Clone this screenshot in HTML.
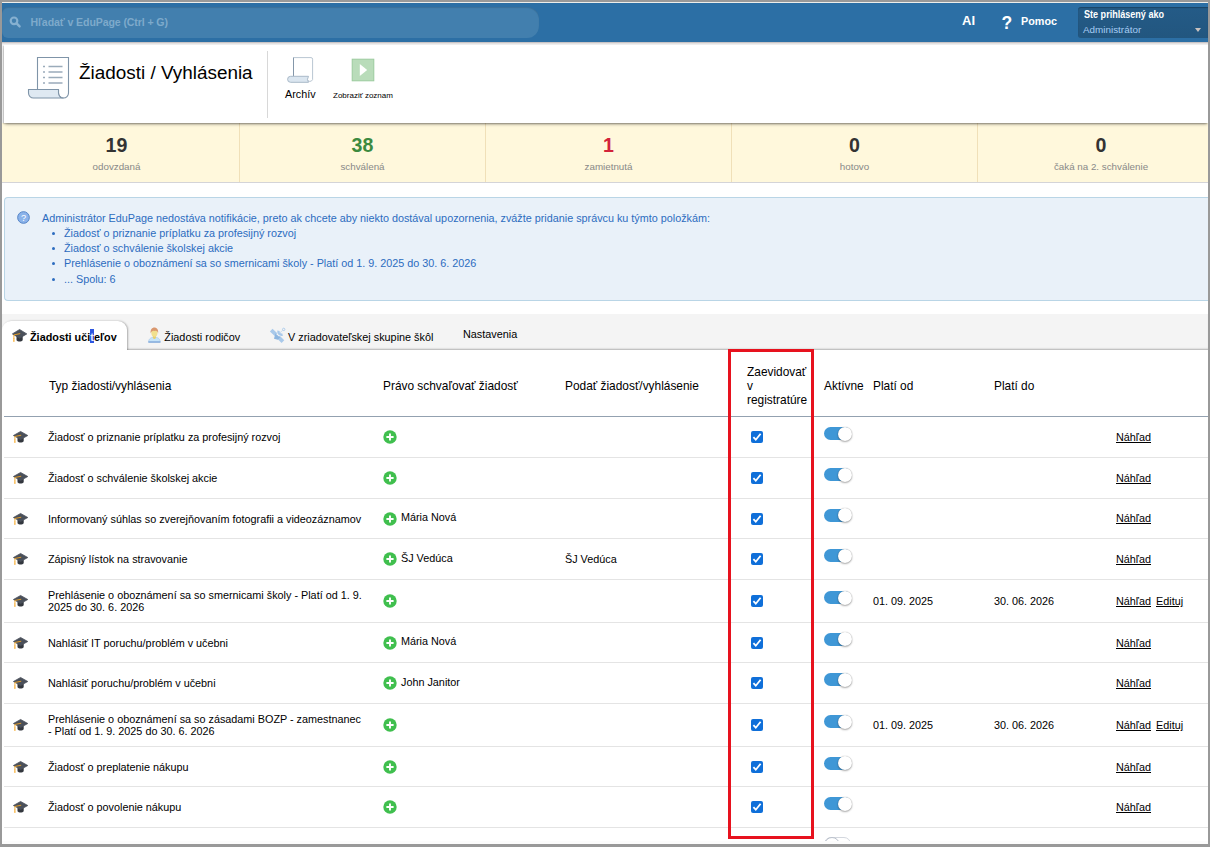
<!DOCTYPE html>
<html lang="sk">
<head>
<meta charset="utf-8">
<title>Žiadosti / Vyhlásenia</title>
<style>
*{box-sizing:border-box;margin:0;padding:0}
html,body{width:1210px;height:847px;overflow:hidden;background:#fff}
body{font-family:"Liberation Sans",sans-serif;font-size:10.82px;color:#000;position:relative}
.abs{position:absolute}
#frame{position:absolute;left:0;top:0;width:1210px;height:847px;border-style:solid;border-color:#999;border-width:2px 2px 3px 2px;z-index:50;pointer-events:none}
#topline{position:absolute;left:2px;top:2px;width:1206px;height:1px;background:#eeeeea}
#bar{position:absolute;left:2px;top:3px;width:1206px;height:39px;background:#2c6fa5}
#search{position:absolute;left:2px;top:7px;width:537px;height:31px;background:#427fae;border-radius:0 12px 12px 0;border-top-left-radius:6px;border-bottom-left-radius:6px;box-shadow:inset 0 1px 1px rgba(0,0,0,.12)}
#search span{position:absolute;left:28.4px;top:9px;font-size:10.55px;font-weight:bold;color:#7eaacb;white-space:nowrap;letter-spacing:-0.1px}
#ai{position:absolute;left:962px;top:13px;font-size:13px;font-weight:bold;color:#fff}
#q{position:absolute;left:1001.5px;top:13px;font-size:17.5px;font-weight:bold;color:#fff}
#pomoc{position:absolute;left:1021px;top:15px;font-size:10.8px;font-weight:bold;color:#fff}
#user{position:absolute;left:1078px;top:7px;width:130px;height:31px;background:linear-gradient(#245b87,#22567f);border-radius:3px 0 0 3px;box-shadow:inset 0 1px 1px rgba(0,0,0,.25)}
#user b{position:absolute;left:6px;top:2px;font-size:10px;color:#fff;white-space:nowrap;transform:scaleX(.905);transform-origin:0 0}
#user span{position:absolute;left:5px;top:17px;font-size:9.9px;color:#a6ccf3;white-space:nowrap}
#user i{position:absolute;left:117px;top:21px;width:0;height:0;border-left:3.5px solid transparent;border-right:3.5px solid transparent;border-top:4px solid #c9c2bf}
#shade{position:absolute;left:2px;top:42px;width:1206px;height:82px;background:linear-gradient(#c9c4c5 0,#c9c4c5 1px,#e3e1e1 1px,#e3e1e1 2px,#efefef 2px,#efefef 3px,#f3f3f3 3px)}
#head{position:absolute;left:4px;top:45px;width:1204px;height:78px;background:#fff;box-shadow:0 2px 3px -1px rgba(0,0,0,.45),-1px 1px 1px rgba(0,0,0,.12);z-index:3}
#title{position:absolute;left:75px;top:16.6px;font-size:18.9px;color:#000;white-space:nowrap}
#vsep{position:absolute;left:263px;top:6px;width:1px;height:67px;background:#d8d8d8}
#archiv{position:absolute;left:281px;top:43px;font-size:10.8px;white-space:nowrap}
#zobr{position:absolute;left:329px;top:46px;font-size:8px;white-space:nowrap}
#stats{position:absolute;left:2px;top:123px;width:1206px;height:60px;background:#fff8dc;border-bottom:1px solid #d4d4d8;overflow:hidden}
.st{position:absolute;top:0;height:59px;text-align:center;border-right:1px solid #f0e0b8}
.st b{display:block;margin-top:11px;font-size:19.6px;line-height:22px;color:#333}
.st span{display:block;margin-top:5px;font-size:9.8px;line-height:12px;color:#888}
#info{position:absolute;left:4px;top:197px;width:1206px;height:104px;background:#e9f1f9;border:1px solid #b9d5e6;border-right:0;border-radius:4px 0 0 4px;color:#2c6cbf;font-size:10.8px;line-height:15px}
#info .t{position:absolute;left:37px;top:13px;white-space:nowrap}
#info ul{position:absolute;left:59px;top:28px;list-style:none}
#info li{white-space:nowrap;position:relative}
#info li:before{content:"";position:absolute;left:-12px;top:6px;width:3px;height:3px;border-radius:50%;background:#2c6cbf}
#qi{position:absolute;left:12px;top:13px;width:13px;height:13px}
#tabs{position:absolute;left:2px;top:314px;width:1206px;height:36px;background:#f4f4f4;box-shadow:inset 0 -2px 2px -1px rgba(0,0,0,.28)}
#tab1{position:absolute;left:0;top:7px;width:125px;height:29px;background:#fff;border-radius:9px 9px 0 0;box-shadow:1px 0 2px rgba(0,0,0,.3);clip-path:inset(-3px -4px 0 -3px)}
.tl{position:absolute;white-space:nowrap;font-size:10.85px}
.th{position:absolute;font-size:11.9px;white-space:nowrap;line-height:14px}
#hsep{position:absolute;left:4px;top:416px;width:1204px;height:1px;background:#93a1b0}
.row{position:absolute;left:4px;width:1204px;border-bottom:1px solid #e4e4e4;box-sizing:content-box}
.row>*{position:absolute}
.capw{left:8.7px;top:50%;margin-top:-6px;width:15px;height:12px}
.c-type{left:44px;white-space:nowrap;line-height:12px}
.c-type.one{top:50%;margin-top:-6px}
.c-type.two{top:50%;margin-top:-12px}
.plusw{left:379px;top:50%;margin-top:-7px;width:14px;height:14px}
.c-appr{left:397px;top:50%;margin-top:-8px;white-space:nowrap;line-height:12px}
.c-subm{left:561px;top:50%;margin-top:-6px;white-space:nowrap;line-height:12px}
.chkw{left:747px;top:50%;margin-top:-6px;width:12px;height:12px}
.tog{left:819.5px;top:50%;margin-top:-10px;width:27px;height:13px;border-radius:6.5px;background:#3f97d6}
.tog i{position:absolute;left:14.2px;top:-0.5px;width:14px;height:14px;border-radius:50%;background:#fff;box-shadow:0 1px 2px rgba(0,0,0,.32),0 0 1px rgba(0,0,0,.35)}
.c-from{left:869px;top:50%;margin-top:-6px;white-space:nowrap;line-height:12px}
.c-to{left:990px;top:50%;margin-top:-6px;white-space:nowrap;line-height:12px}
.c-view{left:1112px;top:50%;margin-top:-6px;text-decoration:underline;white-space:nowrap;line-height:12px}
.c-edit{left:1152px;top:50%;margin-top:-6px;text-decoration:underline;white-space:nowrap;line-height:12px}
svg{display:block;overflow:visible}
#red{position:absolute;left:728px;top:349px;width:86px;height:490px;border:3px solid #e7121e;z-index:20}
#lasttog{position:absolute;left:824px;top:837px;width:27px;height:14px;border-radius:7px;border:1px solid #d3d7de;background:#fff}
#lasttog:before{content:"";position:absolute;left:-1px;top:-1px;width:14px;height:14px;border-radius:50%;border:1px solid #b9c0cb;background:#fff}
#botclip{position:absolute;left:2px;top:841px;width:1206px;height:3px;background:#fcfcfc}
</style>
</head>
<body>
<div id="topline"></div>
<div id="bar"></div>
<div id="search">
<svg class="abs" style="left:7px;top:9px" width="13" height="13" viewBox="0 0 13 13"><circle cx="5" cy="4.8" r="3.3" fill="none" stroke="#86b0d0" stroke-width="2.2"/><path d="M7.6 7.4 L10.6 10.4" stroke="#86b0d0" stroke-width="2.4" stroke-linecap="round"/></svg>
<span>Hľadať v EduPage (Ctrl + G)</span></div>
<div id="ai">AI</div><div id="q">?</div><div id="pomoc">Pomoc</div>
<div id="user"><b>Ste prihlásený ako</b><span>Administrátor</span><i></i></div>
<div id="shade"></div>
<div id="head">
<svg class="abs" style="left:23px;top:11px" width="44" height="44" viewBox="0 0 44 44"><path d="M10.5 33.5 V1.5 H41.5 V37 A5 5 0 0 1 31.5 37 V33.5" fill="#fff" stroke="#7f94a8" stroke-width="1.1"/><path d="M1.5 33.5 H31.5 V37 A5 5 0 0 0 36.5 42 H6.5 A5 5 0 0 1 1.5 37 Z" fill="#dfe9f2" stroke="#7f94a8" stroke-width="1.1"/><g stroke="#9aabba" stroke-width="1.3"><path d="M16 10.5h2M21.5 10.5h14M16 16h2M21.5 16h14M16 21.5h2M21.5 21.5h14M16 27h2M21.5 27h14"/></g></svg>
<div id="title">Žiadosti / Vyhlásenia</div>
<div id="vsep"></div>
<svg class="abs" style="left:283px;top:12px" width="27" height="27" viewBox="0 0 27 27"><path d="M6.5 19.5 V0.6 H24 Q25.6 0.6 25.6 2.2 V22.5 A3 3 0 0 1 20 22.5" fill="#fff" stroke="#b9c6d2" stroke-width="1"/><path d="M6.5 19.5 V0.6" stroke="#8497aa" stroke-width="1"/><path d="M3.6 19.3 H21.5 Q19.4 22.3 21.5 25.3 H3.6 A3 3 0 0 1 3.6 19.3 Z" fill="#dbe6f0" stroke="#a9b9c8" stroke-width="1"/></svg>
<div id="archiv">Archív</div>
<svg class="abs" style="left:347px;top:13px" width="24" height="24" viewBox="0 0 24 24"><rect x="1.2" y="1.2" width="21.6" height="21.6" fill="#b9dcba" stroke="#9ccb9f" stroke-width="1"/><path d="M8.8 6 L16.2 12 L8.8 18 Z" fill="#fff"/></svg>
<div id="zobr">Zobraziť zoznam</div>
</div>
<div id="stats">
<div class="st" style="left:-8px;width:246px"><b>19</b><span>odovzdaná</span></div>
<div class="st" style="left:238px;width:246px"><b style="color:#3c8a3f">38</b><span>schválená</span></div>
<div class="st" style="left:484px;width:246px"><b style="color:#d3233a">1</b><span>zamietnutá</span></div>
<div class="st" style="left:730px;width:246px"><b>0</b><span>hotovo</span></div>
<div class="st" style="left:976px;width:246px;border-right:0"><b>0</b><span>čaká na 2. schválenie</span></div>
</div>
<div id="info">
<svg id="qi" viewBox="0 0 14 14"><circle cx="7" cy="7" r="6.3" fill="#8bb3ea" stroke="#4f7fc4" stroke-width="1"/><text x="7" y="10.6" text-anchor="middle" font-family="Liberation Sans, sans-serif" font-size="10" fill="#fff">?</text></svg>
<div class="t">Administrátor EduPage nedostáva notifikácie, preto ak chcete aby niekto dostával upozornenia, zvážte pridanie správcu ku týmto položkám:</div>
<ul><li>Žiadosť o priznanie príplatku za profesijný rozvoj</li><li>Žiadosť o schválenie školskej akcie</li><li>Prehlásenie o oboznámení sa so smernicami školy - Platí od 1. 9. 2025 do 30. 6. 2026</li><li style="margin-top:1px">... Spolu: 6</li></ul>
</div>
<div id="tabs">
<div id="tab1"></div>
<svg class="abs" style="left:10px;top:15px" viewBox="0 0 15 13" width="15" height="13"><path d="M4.5 7 V11.2 C5.6 13 9.6 13 10.7 11.2 V7 Z" fill="#33373e"/><path d="M7.6 0.5 L14.8 4.9 L7.6 9.2 L0.4 4.9 Z" fill="#4a505a" stroke="#4a505a" stroke-width="0.8" stroke-linejoin="round"/><path d="M8.2 4.6 L1.9 5.9 V10" fill="none" stroke="#f5a623" stroke-width="0.9"/><path d="M1.5 9.2 H2.3 L2.6 12.7 H1.2 Z" fill="#f5a623"/></svg>
<div class="tl" style="left:28px;top:17px;font-weight:bold">Žiadosti uči<span style="background:#2d56e0;color:#e8ecff;padding:2px 0 0">t</span>eľov</div>
<svg class="abs" style="left:145.5px;top:12.4px" width="13" height="17" viewBox="0 0 13 17"><path d="M0.5 16.2 C0.7 12.2 3.6 11.2 6.4 11.2 C9.2 11.2 12.1 12.2 12.3 16.2 Z" fill="#c6e4f9" stroke="#a9c8ea" stroke-width="0.7"/><path d="M0.4 16 H12.4" stroke="#7fa6d8" stroke-width="1.3"/><path d="M4.9 9 H7.9 V12 C7.3 13.2 5.5 13.2 4.9 12 Z" fill="#e6cf6e"/><ellipse cx="6.4" cy="6.8" rx="3.1" ry="4" fill="#f1e08f"/><path d="M2.7 7.4 C1.4 -0.6 11.4 -0.6 10.1 7.4 C9.8 5.2 8.4 4.3 6.6 5 C5 4.1 3.2 5.2 2.7 7.4 Z" fill="#d9976e"/></svg>
<div class="tl" style="left:162.3px;top:17px">Žiadosti rodičov</div>
<svg class="abs" style="left:266px;top:13px" width="18" height="17" viewBox="0 0 18 17"><g stroke="#a9c9ea" fill="none"><path d="M3.2 3.2 L8 7.6" stroke-width="3.8"/><path d="M10.4 10.2 L14.9 14.7" stroke-width="3.8"/><path d="M10.5 3.8 C10 6.6 11.8 8.2 14.6 7.7" stroke-width="2.4"/><path d="M12.4 5.4 L14.7 3.4" stroke-width="1" stroke-dasharray="1 0.6"/><circle cx="15.7" cy="2.4" r="1.2" stroke-width="0.9"/></g><path d="M7.4 6.4 L12.2 10.4 L9.8 12.8 L6 11.8 Z" fill="#8db6e0"/></svg>
<div class="tl" style="left:286px;top:17px">V zriadovateľskej skupine škôl</div>
<div class="tl" style="left:461px;top:14px">Nastavenia</div>
</div>
<div class="th" style="left:49px;top:379px">Typ žiadosti/vyhlásenia</div>
<div class="th" style="left:383px;top:379px">Právo schvaľovať žiadosť</div>
<div class="th" style="left:565px;top:379px">Podať žiadosť/vyhlásenie</div>
<div class="th" style="left:747px;top:365px">Zaevidovať<br>v<br>registratúre</div>
<div class="th" style="left:824px;top:379px">Aktívne</div>
<div class="th" style="left:873px;top:379px">Platí od</div>
<div class="th" style="left:994px;top:379px">Platí do</div>
<div id="hsep"></div>
<div class="row" style="top:417px;height:40px">
<span class="capw"><svg class="cap" viewBox="0 0 15 13" width="15" height="12" preserveAspectRatio="none"><path d="M4.5 7 V11.2 C5.6 13 9.6 13 10.7 11.2 V7 Z" fill="#33373e"/><path d="M7.6 0.5 L14.8 4.9 L7.6 9.2 L0.4 4.9 Z" fill="#4a505a" stroke="#4a505a" stroke-width="0.8" stroke-linejoin="round"/><path d="M8.2 4.6 L1.9 5.9 V10" fill="none" stroke="#f5a623" stroke-width="0.9"/><path d="M1.5 9.2 H2.3 L2.6 12.7 H1.2 Z" fill="#f5a623"/></svg></span>
<div class="c-type one">Žiadosť o priznanie príplatku za profesijný rozvoj</div>
<span class="plusw"><svg class="plus" viewBox="0 0 14 14" width="14" height="14"><circle cx="7" cy="7" r="6.7" fill="#40bf4e"/><path d="M7 3.4 V10.6 M3.4 7 H10.6" stroke="#fff" stroke-width="1.9"/></svg></span>
<span class="chkw"><svg class="chk" viewBox="0 0 12 12" width="12" height="12"><rect x="0" y="0" width="12" height="12" rx="2" fill="#0f6fd9"/><path d="M2.4 6.2 L4.8 8.7 L9.6 2.8" fill="none" stroke="#fff" stroke-width="1.8"/></svg></span>
<span class="tog"><i></i></span>
<a class="c-view" style="margin-top:-6px">Náhľad</a>
</div>
<div class="row" style="top:458px;height:40px">
<span class="capw"><svg class="cap" viewBox="0 0 15 13" width="15" height="12" preserveAspectRatio="none"><path d="M4.5 7 V11.2 C5.6 13 9.6 13 10.7 11.2 V7 Z" fill="#33373e"/><path d="M7.6 0.5 L14.8 4.9 L7.6 9.2 L0.4 4.9 Z" fill="#4a505a" stroke="#4a505a" stroke-width="0.8" stroke-linejoin="round"/><path d="M8.2 4.6 L1.9 5.9 V10" fill="none" stroke="#f5a623" stroke-width="0.9"/><path d="M1.5 9.2 H2.3 L2.6 12.7 H1.2 Z" fill="#f5a623"/></svg></span>
<div class="c-type one">Žiadosť o schválenie školskej akcie</div>
<span class="plusw"><svg class="plus" viewBox="0 0 14 14" width="14" height="14"><circle cx="7" cy="7" r="6.7" fill="#40bf4e"/><path d="M7 3.4 V10.6 M3.4 7 H10.6" stroke="#fff" stroke-width="1.9"/></svg></span>
<span class="chkw"><svg class="chk" viewBox="0 0 12 12" width="12" height="12"><rect x="0" y="0" width="12" height="12" rx="2" fill="#0f6fd9"/><path d="M2.4 6.2 L4.8 8.7 L9.6 2.8" fill="none" stroke="#fff" stroke-width="1.8"/></svg></span>
<span class="tog"><i></i></span>
<a class="c-view" style="margin-top:-6px">Náhľad</a>
</div>
<div class="row" style="top:499px;height:39px">
<span class="capw"><svg class="cap" viewBox="0 0 15 13" width="15" height="12" preserveAspectRatio="none"><path d="M4.5 7 V11.2 C5.6 13 9.6 13 10.7 11.2 V7 Z" fill="#33373e"/><path d="M7.6 0.5 L14.8 4.9 L7.6 9.2 L0.4 4.9 Z" fill="#4a505a" stroke="#4a505a" stroke-width="0.8" stroke-linejoin="round"/><path d="M8.2 4.6 L1.9 5.9 V10" fill="none" stroke="#f5a623" stroke-width="0.9"/><path d="M1.5 9.2 H2.3 L2.6 12.7 H1.2 Z" fill="#f5a623"/></svg></span>
<div class="c-type one">Informovaný súhlas so zverejňovaním fotografii a videozáznamov</div>
<span class="plusw"><svg class="plus" viewBox="0 0 14 14" width="14" height="14"><circle cx="7" cy="7" r="6.7" fill="#40bf4e"/><path d="M7 3.4 V10.6 M3.4 7 H10.6" stroke="#fff" stroke-width="1.9"/></svg></span>
<div class="c-appr" style="margin-top:-8px">Mária Nová</div>
<span class="chkw"><svg class="chk" viewBox="0 0 12 12" width="12" height="12"><rect x="0" y="0" width="12" height="12" rx="2" fill="#0f6fd9"/><path d="M2.4 6.2 L4.8 8.7 L9.6 2.8" fill="none" stroke="#fff" stroke-width="1.8"/></svg></span>
<span class="tog"><i></i></span>
<a class="c-view" style="margin-top:-7px">Náhľad</a>
</div>
<div class="row" style="top:539px;height:40px">
<span class="capw"><svg class="cap" viewBox="0 0 15 13" width="15" height="12" preserveAspectRatio="none"><path d="M4.5 7 V11.2 C5.6 13 9.6 13 10.7 11.2 V7 Z" fill="#33373e"/><path d="M7.6 0.5 L14.8 4.9 L7.6 9.2 L0.4 4.9 Z" fill="#4a505a" stroke="#4a505a" stroke-width="0.8" stroke-linejoin="round"/><path d="M8.2 4.6 L1.9 5.9 V10" fill="none" stroke="#f5a623" stroke-width="0.9"/><path d="M1.5 9.2 H2.3 L2.6 12.7 H1.2 Z" fill="#f5a623"/></svg></span>
<div class="c-type one">Zápisný lístok na stravovanie</div>
<span class="plusw"><svg class="plus" viewBox="0 0 14 14" width="14" height="14"><circle cx="7" cy="7" r="6.7" fill="#40bf4e"/><path d="M7 3.4 V10.6 M3.4 7 H10.6" stroke="#fff" stroke-width="1.9"/></svg></span>
<div class="c-appr" style="margin-top:-7px">ŠJ Vedúca</div>
<div class="c-subm">ŠJ Vedúca</div>
<span class="chkw"><svg class="chk" viewBox="0 0 12 12" width="12" height="12"><rect x="0" y="0" width="12" height="12" rx="2" fill="#0f6fd9"/><path d="M2.4 6.2 L4.8 8.7 L9.6 2.8" fill="none" stroke="#fff" stroke-width="1.8"/></svg></span>
<span class="tog"><i></i></span>
<a class="c-view" style="margin-top:-6px">Náhľad</a>
</div>
<div class="row" style="top:580px;height:42px">
<span class="capw"><svg class="cap" viewBox="0 0 15 13" width="15" height="12" preserveAspectRatio="none"><path d="M4.5 7 V11.2 C5.6 13 9.6 13 10.7 11.2 V7 Z" fill="#33373e"/><path d="M7.6 0.5 L14.8 4.9 L7.6 9.2 L0.4 4.9 Z" fill="#4a505a" stroke="#4a505a" stroke-width="0.8" stroke-linejoin="round"/><path d="M8.2 4.6 L1.9 5.9 V10" fill="none" stroke="#f5a623" stroke-width="0.9"/><path d="M1.5 9.2 H2.3 L2.6 12.7 H1.2 Z" fill="#f5a623"/></svg></span>
<div class="c-type two">Prehlásenie o oboznámení sa so smernicami školy - Platí od 1. 9.<br>2025 do 30. 6. 2026</div>
<span class="plusw"><svg class="plus" viewBox="0 0 14 14" width="14" height="14"><circle cx="7" cy="7" r="6.7" fill="#40bf4e"/><path d="M7 3.4 V10.6 M3.4 7 H10.6" stroke="#fff" stroke-width="1.9"/></svg></span>
<span class="chkw"><svg class="chk" viewBox="0 0 12 12" width="12" height="12"><rect x="0" y="0" width="12" height="12" rx="2" fill="#0f6fd9"/><path d="M2.4 6.2 L4.8 8.7 L9.6 2.8" fill="none" stroke="#fff" stroke-width="1.8"/></svg></span>
<span class="tog"><i></i></span>
<div class="c-from">01. 09. 2025</div>
<div class="c-to">30. 06. 2026</div>
<a class="c-view" style="margin-top:-6px">Náhľad</a>
<a class="c-edit">Edituj</a>
</div>
<div class="row" style="top:623px;height:39px">
<span class="capw"><svg class="cap" viewBox="0 0 15 13" width="15" height="12" preserveAspectRatio="none"><path d="M4.5 7 V11.2 C5.6 13 9.6 13 10.7 11.2 V7 Z" fill="#33373e"/><path d="M7.6 0.5 L14.8 4.9 L7.6 9.2 L0.4 4.9 Z" fill="#4a505a" stroke="#4a505a" stroke-width="0.8" stroke-linejoin="round"/><path d="M8.2 4.6 L1.9 5.9 V10" fill="none" stroke="#f5a623" stroke-width="0.9"/><path d="M1.5 9.2 H2.3 L2.6 12.7 H1.2 Z" fill="#f5a623"/></svg></span>
<div class="c-type one">Nahlásiť IT poruchu/problém v učebni</div>
<span class="plusw"><svg class="plus" viewBox="0 0 14 14" width="14" height="14"><circle cx="7" cy="7" r="6.7" fill="#40bf4e"/><path d="M7 3.4 V10.6 M3.4 7 H10.6" stroke="#fff" stroke-width="1.9"/></svg></span>
<div class="c-appr" style="margin-top:-8px">Mária Nová</div>
<span class="chkw"><svg class="chk" viewBox="0 0 12 12" width="12" height="12"><rect x="0" y="0" width="12" height="12" rx="2" fill="#0f6fd9"/><path d="M2.4 6.2 L4.8 8.7 L9.6 2.8" fill="none" stroke="#fff" stroke-width="1.8"/></svg></span>
<span class="tog"><i></i></span>
<a class="c-view" style="margin-top:-6px">Náhľad</a>
</div>
<div class="row" style="top:663px;height:40px">
<span class="capw"><svg class="cap" viewBox="0 0 15 13" width="15" height="12" preserveAspectRatio="none"><path d="M4.5 7 V11.2 C5.6 13 9.6 13 10.7 11.2 V7 Z" fill="#33373e"/><path d="M7.6 0.5 L14.8 4.9 L7.6 9.2 L0.4 4.9 Z" fill="#4a505a" stroke="#4a505a" stroke-width="0.8" stroke-linejoin="round"/><path d="M8.2 4.6 L1.9 5.9 V10" fill="none" stroke="#f5a623" stroke-width="0.9"/><path d="M1.5 9.2 H2.3 L2.6 12.7 H1.2 Z" fill="#f5a623"/></svg></span>
<div class="c-type one">Nahlásiť poruchu/problém v učebni</div>
<span class="plusw"><svg class="plus" viewBox="0 0 14 14" width="14" height="14"><circle cx="7" cy="7" r="6.7" fill="#40bf4e"/><path d="M7 3.4 V10.6 M3.4 7 H10.6" stroke="#fff" stroke-width="1.9"/></svg></span>
<div class="c-appr" style="margin-top:-7px">John Janitor</div>
<span class="chkw"><svg class="chk" viewBox="0 0 12 12" width="12" height="12"><rect x="0" y="0" width="12" height="12" rx="2" fill="#0f6fd9"/><path d="M2.4 6.2 L4.8 8.7 L9.6 2.8" fill="none" stroke="#fff" stroke-width="1.8"/></svg></span>
<span class="tog"><i></i></span>
<a class="c-view" style="margin-top:-6px">Náhľad</a>
</div>
<div class="row" style="top:704px;height:42px">
<span class="capw"><svg class="cap" viewBox="0 0 15 13" width="15" height="12" preserveAspectRatio="none"><path d="M4.5 7 V11.2 C5.6 13 9.6 13 10.7 11.2 V7 Z" fill="#33373e"/><path d="M7.6 0.5 L14.8 4.9 L7.6 9.2 L0.4 4.9 Z" fill="#4a505a" stroke="#4a505a" stroke-width="0.8" stroke-linejoin="round"/><path d="M8.2 4.6 L1.9 5.9 V10" fill="none" stroke="#f5a623" stroke-width="0.9"/><path d="M1.5 9.2 H2.3 L2.6 12.7 H1.2 Z" fill="#f5a623"/></svg></span>
<div class="c-type two">Prehlásenie o oboznámení sa so zásadami BOZP - zamestnanec<br>- Platí od 1. 9. 2025 do 30. 6. 2026</div>
<span class="plusw"><svg class="plus" viewBox="0 0 14 14" width="14" height="14"><circle cx="7" cy="7" r="6.7" fill="#40bf4e"/><path d="M7 3.4 V10.6 M3.4 7 H10.6" stroke="#fff" stroke-width="1.9"/></svg></span>
<span class="chkw"><svg class="chk" viewBox="0 0 12 12" width="12" height="12"><rect x="0" y="0" width="12" height="12" rx="2" fill="#0f6fd9"/><path d="M2.4 6.2 L4.8 8.7 L9.6 2.8" fill="none" stroke="#fff" stroke-width="1.8"/></svg></span>
<span class="tog"><i></i></span>
<div class="c-from">01. 09. 2025</div>
<div class="c-to">30. 06. 2026</div>
<a class="c-view" style="margin-top:-6px">Náhľad</a>
<a class="c-edit">Edituj</a>
</div>
<div class="row" style="top:747px;height:39px">
<span class="capw"><svg class="cap" viewBox="0 0 15 13" width="15" height="12" preserveAspectRatio="none"><path d="M4.5 7 V11.2 C5.6 13 9.6 13 10.7 11.2 V7 Z" fill="#33373e"/><path d="M7.6 0.5 L14.8 4.9 L7.6 9.2 L0.4 4.9 Z" fill="#4a505a" stroke="#4a505a" stroke-width="0.8" stroke-linejoin="round"/><path d="M8.2 4.6 L1.9 5.9 V10" fill="none" stroke="#f5a623" stroke-width="0.9"/><path d="M1.5 9.2 H2.3 L2.6 12.7 H1.2 Z" fill="#f5a623"/></svg></span>
<div class="c-type one">Žiadosť o preplatenie nákupu</div>
<span class="plusw"><svg class="plus" viewBox="0 0 14 14" width="14" height="14"><circle cx="7" cy="7" r="6.7" fill="#40bf4e"/><path d="M7 3.4 V10.6 M3.4 7 H10.6" stroke="#fff" stroke-width="1.9"/></svg></span>
<span class="chkw"><svg class="chk" viewBox="0 0 12 12" width="12" height="12"><rect x="0" y="0" width="12" height="12" rx="2" fill="#0f6fd9"/><path d="M2.4 6.2 L4.8 8.7 L9.6 2.8" fill="none" stroke="#fff" stroke-width="1.8"/></svg></span>
<span class="tog"><i></i></span>
<a class="c-view" style="margin-top:-6px">Náhľad</a>
</div>
<div class="row" style="top:787px;height:40px">
<span class="capw"><svg class="cap" viewBox="0 0 15 13" width="15" height="12" preserveAspectRatio="none"><path d="M4.5 7 V11.2 C5.6 13 9.6 13 10.7 11.2 V7 Z" fill="#33373e"/><path d="M7.6 0.5 L14.8 4.9 L7.6 9.2 L0.4 4.9 Z" fill="#4a505a" stroke="#4a505a" stroke-width="0.8" stroke-linejoin="round"/><path d="M8.2 4.6 L1.9 5.9 V10" fill="none" stroke="#f5a623" stroke-width="0.9"/><path d="M1.5 9.2 H2.3 L2.6 12.7 H1.2 Z" fill="#f5a623"/></svg></span>
<div class="c-type one">Žiadosť o povolenie nákupu</div>
<span class="plusw"><svg class="plus" viewBox="0 0 14 14" width="14" height="14"><circle cx="7" cy="7" r="6.7" fill="#40bf4e"/><path d="M7 3.4 V10.6 M3.4 7 H10.6" stroke="#fff" stroke-width="1.9"/></svg></span>
<span class="chkw"><svg class="chk" viewBox="0 0 12 12" width="12" height="12"><rect x="0" y="0" width="12" height="12" rx="2" fill="#0f6fd9"/><path d="M2.4 6.2 L4.8 8.7 L9.6 2.8" fill="none" stroke="#fff" stroke-width="1.8"/></svg></span>
<span class="tog"><i></i></span>
<a class="c-view" style="margin-top:-6px">Náhľad</a>
</div>
<div id="lasttog"></div>
<div id="botclip"></div>
<div id="red"></div>
<div id="frame"></div>
</body>
</html>
